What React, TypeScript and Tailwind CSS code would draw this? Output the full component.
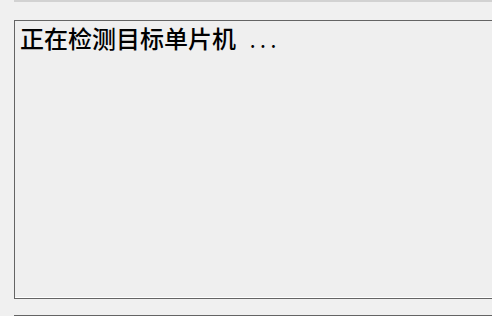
export default function App() {
  return (
    <div className="w-[492px] h-[316px] overflow-hidden bg-[#f0f0f0] pl-[14px]">
      {/* bottom edge of the panel above */}
      <div className="h-[2px] bg-[#d2d2d2]" />

      {/* log box */}
      <div className="mt-[18px] h-[279px] -mr-4 border-l border-t border-b border-[#646464] bg-[#efefef]">
        <div className="h-full border-b border-white pl-[5px] pt-[3px]">
          <p
            className="text-[24px] leading-[1.2] font-medium text-black whitespace-nowrap"
            style={{ fontFamily: '"Noto Sans CJK SC", "Noto Sans", sans-serif' }}
          >
            正在检测目标单片机
            <span className="ml-[14px] tracking-[5px] text-[18px]">...</span>
          </p>
        </div>
      </div>

      {/* top edge of the next box */}
      <div className="mt-[16px] -mr-4 border-t border-[#646464]" />
    </div>
  );
}
